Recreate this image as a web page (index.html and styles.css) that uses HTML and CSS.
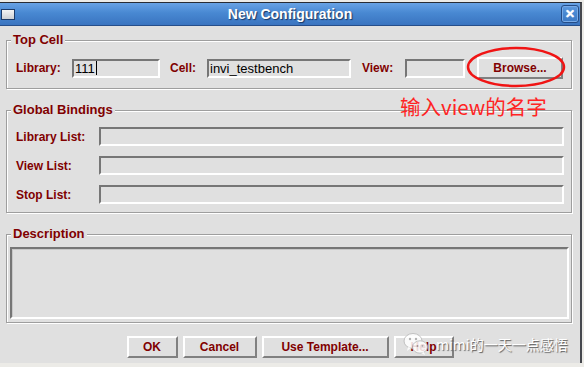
FILE: index.html
```html
<!DOCTYPE html>
<html lang="en">
<head>
    <meta charset="UTF-8">
    <meta name="viewport" content="width=device-width, initial-scale=1.0">
    <title>New Configuration</title>

    <link rel="stylesheet" href="styles.css">
</head>
<body>
    <div class="window">
        <div class="titlebar">
            <span class="win-icon"></span>
            <span class="title">New Configuration</span>
            <span class="btn-close">&#x2715;</span>
        </div>

        <div class="dialog">
            <fieldset class="group group-top">
                <legend>Top Cell</legend>
                <div class="cell-row">
                    <label class="lbl lbl-lib">Library:</label>
                    <div class="field field-lib">111<span class="caret"></span></div>
                    <label class="lbl lbl-cell">Cell:</label>
                    <div class="field field-cell">invi_testbench</div>
                    <label class="lbl lbl-view">View:</label>
                    <div class="field field-view"></div>
                    <button class="btn btn-browse" type="button">Browse...</button>
                </div>
            </fieldset>

            <fieldset class="group group-bind">
                <legend>Global Bindings</legend>
                <div class="bind-row">
                    <label class="lbl lbl-list">Library List:</label>
                    <div class="field field-list"></div>
                </div>
                <div class="bind-row">
                    <label class="lbl lbl-list">View List:</label>
                    <div class="field field-list"></div>
                </div>
                <div class="bind-row">
                    <label class="lbl lbl-list">Stop List:</label>
                    <div class="field field-list"></div>
                </div>
            </fieldset>

            <fieldset class="group group-desc">
                <legend>Description</legend>
                <div class="desc-box"></div>
            </fieldset>

            <div class="actions">
                <button class="btn btn-ok" type="button">OK</button>
                <button class="btn btn-cancel" type="button">Cancel</button>
                <button class="btn btn-template" type="button">Use Template...</button>
                <button class="btn btn-help" type="button">Help</button>
            </div>
        </div>

        <!-- annotations drawn on top of the screenshot -->
        <svg class="mark-ring" width="104" height="44" viewBox="0 0 104 44">
            <ellipse cx="52" cy="21" rx="48" ry="19" fill="none" stroke="#f01414" stroke-width="2.5"/>
        </svg>
        <div class="note">输入view的名字</div>

        <div class="watermark">
            <svg class="wm-icon" width="26" height="24" viewBox="0 0 26 24">
                <ellipse cx="10" cy="9" rx="9" ry="7.5" fill="#fff" stroke="#bbb" stroke-width="1"/>
                <path d="M5 15 L4 19 L8 16 Z" fill="#fff"/>
                <circle cx="7" cy="7" r="1.2" fill="#aaa"/>
                <circle cx="13" cy="7" r="1.2" fill="#aaa"/>
                <ellipse cx="17" cy="15" rx="7.5" ry="6.2" fill="#fff" stroke="#bbb" stroke-width="1"/>
                <path d="M21 20 L22 23 L18 21 Z" fill="#fff"/>
                <circle cx="14.5" cy="14" r="1" fill="#aaa"/>
                <circle cx="19.5" cy="14" r="1" fill="#aaa"/>
            </svg>
            <span class="wm-text">mimi的一天一点感悟</span>
        </div>
    </div>
</body>
</html>
```

FILE: styles.css
```css
body{
    margin: 0;
    background-color: rgb(236, 235, 231);
    font-family: "Liberation Sans", Arial, sans-serif;
}

.window{
    position: relative;
    width: 580px;
    height: 360px;
    margin-top: 2px;
    border-top: 1px solid rgb(40, 44, 52);
    border-right: 2px solid rgb(70, 72, 78);
    background-color: rgb(224, 224, 224);
}

/* title bar */
.titlebar{
    height: 22px;
    border-bottom: 1px solid rgb(38, 78, 138);
    background: linear-gradient(rgb(104, 162, 228), rgb(72, 136, 210) 45%, rgb(58, 116, 192));
    display: grid;
    grid-template-columns: 24px 1fr 24px;
    align-items: center;
}

.win-icon{
    width: 12px;
    height: 9px;
    margin-left: 1px;
    border: 1px solid rgb(30, 60, 105);
    background: linear-gradient(rgb(245, 245, 245), rgb(205, 208, 212));
}

.title{
    text-align: center;
    color: white;
    font-size: 14px;
    font-weight: bold;
    text-shadow: 1px 1px 1px rgb(25, 55, 100);
}

.btn-close{
    justify-self: end;
    width: 16px;
    height: 16px;
    margin-right: 1px;
    border: 1px solid rgb(36, 76, 135);
    border-radius: 3px;
    box-shadow: inset 0 0 0 1px rgb(120, 170, 230);
    color: white;
    font-size: 12px;
    font-weight: bold;
    line-height: 16px;
    text-align: center;
    text-shadow: 0 0 1px white;
}

/* dialog body */
.dialog{
    padding-top: 7px;
}

.group{
    margin: 0 8px 0 6px;
    border: 1px solid rgb(158, 158, 158);
    box-shadow: inset 1px 1px 0 white, 1px 1px 0 white;
    min-inline-size: 0;
}

.group legend{
    margin-left: -5px;
    padding: 0 2px;
    background-color: rgb(224, 224, 224);
    color: rgb(128, 0, 0);
    font-size: 13px;
    font-weight: bold;
    line-height: 14px;
}

.group-top{
    padding: 10px 7px 9px 9px;
}

.group-bind{
    margin-top: 14px;
    padding: 10px 7px 8px 9px;
}

.group-desc{
    margin-top: 14px;
    padding: 6px 2px 3px 3px;
}

.group-desc legend{
    margin-left: 1px;
}

.lbl{
    color: rgb(128, 0, 0);
    font-size: 12px;
    font-weight: bold;
    white-space: nowrap;
}

.field{
    box-sizing: border-box;
    height: 19px;
    border: 2px solid;
    border-color: rgb(118, 118, 118) white white rgb(118, 118, 118);
    padding-left: 1px;
    font-size: 13px;
    line-height: 15px;
    color: black;
    white-space: nowrap;
}

.caret{
    display: inline-block;
    width: 1px;
    height: 14px;
    margin-left: 1px;
    vertical-align: -2px;
    background-color: black;
}

.cell-row{
    display: flex;
    align-items: center;
    height: 22px;
}

.lbl-lib{ width: 56px; }
.field-lib{ width: 88px; }
.lbl-cell{ width: 37px; margin-left: 10px; }
.field-cell{ width: 144px; }
.lbl-view{ width: 43px; margin-left: 11px; }
.field-view{ width: 60px; }

.btn{
    box-sizing: border-box;
    height: 22px;
    padding: 0;
    border: 2px solid;
    border-color: white rgb(128, 128, 128) rgb(128, 128, 128) white;
    background-color: rgb(224, 224, 224);
    color: rgb(128, 0, 0);
    font-family: "Liberation Sans", Arial, sans-serif;
    font-size: 12px;
    font-weight: bold;
}

.btn-browse{
    width: 86px;
    margin-left: 12px;
}

.bind-row{
    display: flex;
    align-items: center;
}

.bind-row + .bind-row{
    margin-top: 10px;
}

.lbl-list{ width: 83px; }
.field-list{ flex: 1; }

.desc-box{
    box-sizing: border-box;
    height: 72px;
    border: 2px solid;
    border-color: rgb(118, 118, 118) white white rgb(118, 118, 118);
    box-shadow: inset 1px 1px 0 rgb(200, 200, 200);
}

.actions{
    margin-top: 13px;
    display: flex;
    justify-content: center;
    gap: 5px;
}

.btn-ok{ width: 51px; }
.btn-cancel{ width: 74px; }
.btn-template{ width: 127px; }
.btn-help{ width: 60px; }

/* red annotation over the dialog */
.mark-ring{
    position: absolute;
    left: 464px;
    top: 43px;
}

.note{
    position: absolute;
    left: 400px;
    top: 91px;
    color: rgb(255, 36, 36);
    font-family: "Noto Sans CJK SC", "Noto Sans", sans-serif;
    font-size: 20.5px;
    line-height: 24px;
    white-space: nowrap;
}

.watermark{
    position: absolute;
    left: 403px;
    top: 329px;
    display: flex;
    align-items: center;
    gap: 7px;
}

.wm-icon{
    opacity: 0.85;
}

.wm-text{
    color: white;
    font-family: "Noto Sans CJK SC", "Noto Sans", sans-serif;
    font-size: 14px;
    text-shadow: 1px 1px 1px rgb(90, 90, 90);
    white-space: nowrap;
}
```
